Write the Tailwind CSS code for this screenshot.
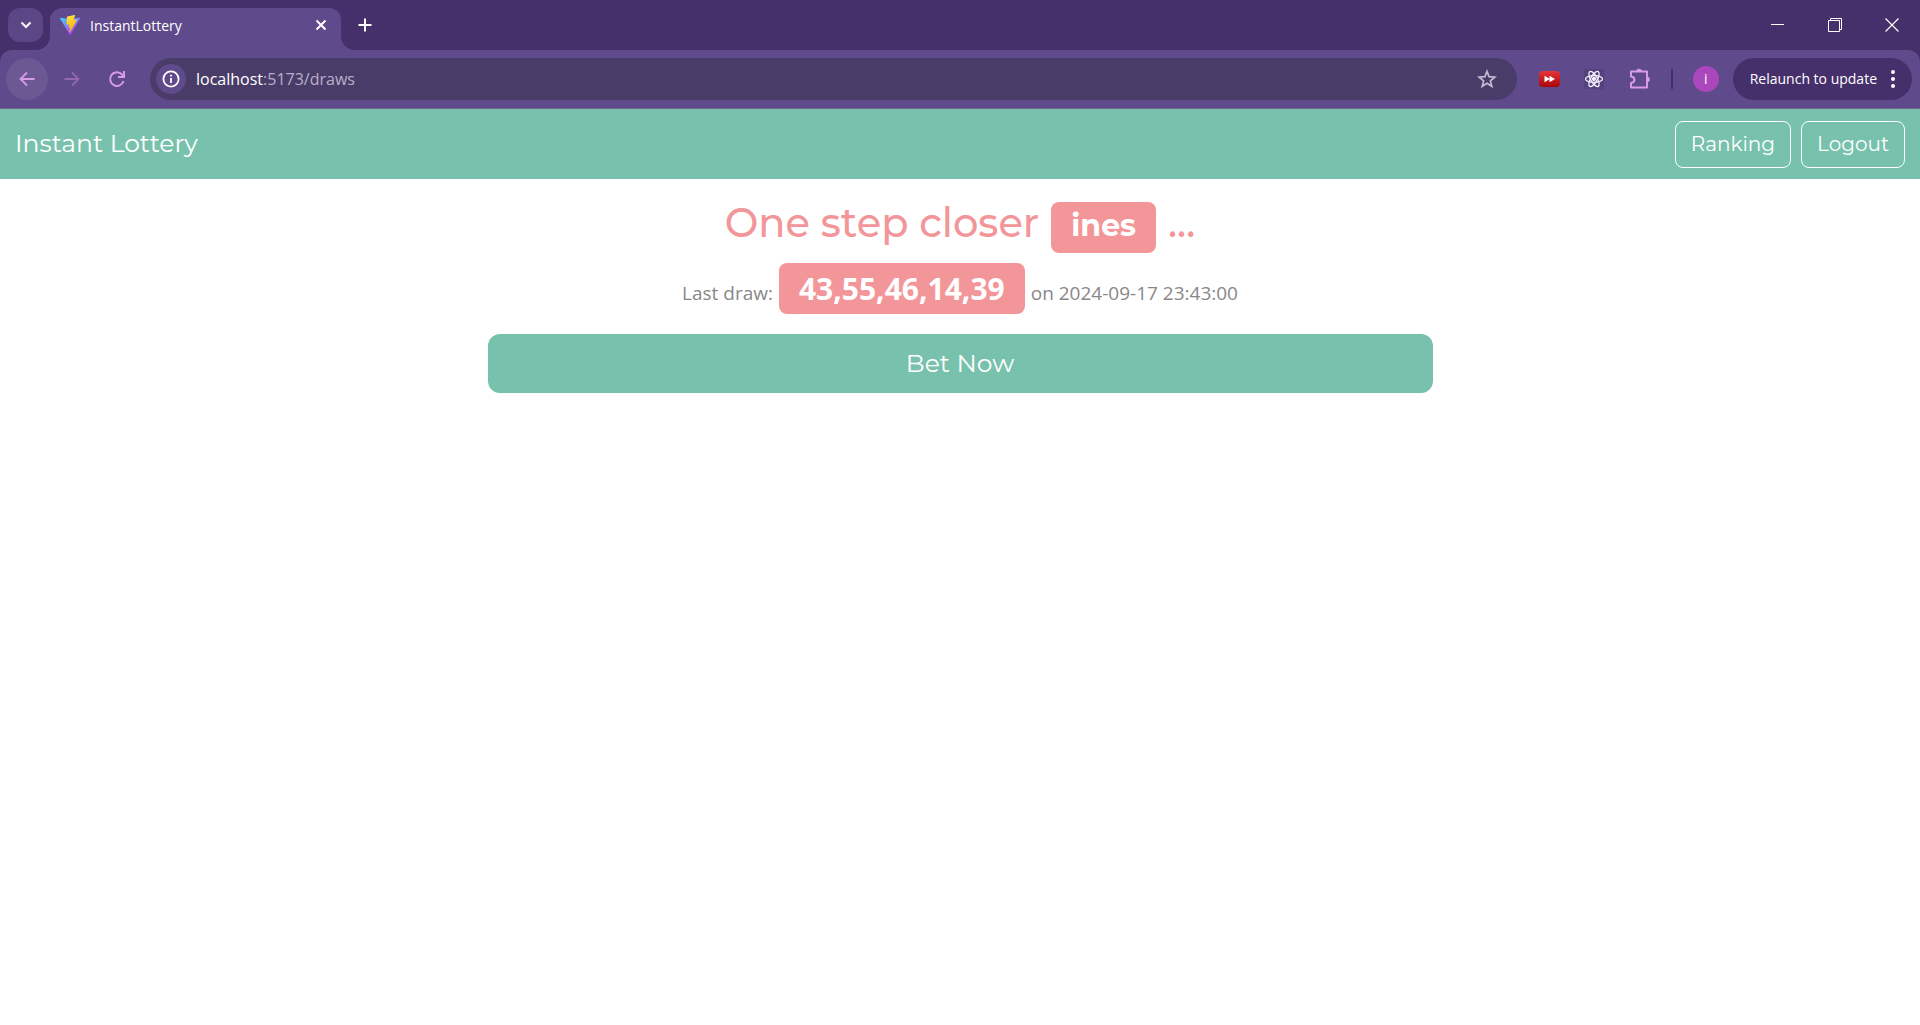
<!DOCTYPE html>
<html lang="en">
<head>
<meta charset="utf-8">
<title>InstantLottery</title>
<script src="https://cdn.jsdelivr.net/npm/@tailwindcss/browser@4"></script>
</head>
<body class="min-h-screen bg-white font-['Segoe_UI','Open_Sans',sans-serif] text-[#888888]">

<!-- Tab strip -->
<div class="flex h-[50px] items-start bg-[#46306b] pl-2 pt-2 text-white">
  <button aria-label="Search tabs" class="flex h-[34px] w-[35px] items-center justify-center rounded-xl bg-[#5b4686]">
    <svg class="size-3" viewBox="0 0 12 12" fill="none" stroke="currentColor" stroke-width="2"><path d="M1.500 3.500 6 8l4.500-4.500"/></svg>
  </button>
  <div class="relative ml-[7px] flex h-[42px] w-[291px] items-center rounded-t-xl bg-[#5f4a8b] pb-4 pl-2.5 pr-3">
    <svg class="absolute right-full bottom-0 h-3.5 w-3.5 text-[#5f4a8b]" viewBox="0 0 14 14" fill="currentColor"><path d="M14 0v14H0A14 14 0 0 0 14 0Z"/></svg>
    <svg class="absolute bottom-0 left-full h-3.5 w-3.5 text-[#5f4a8b]" viewBox="0 0 14 14" fill="currentColor"><path d="M0 0v14h14A14 14 0 0 1 0 0Z"/></svg>
    <svg class="mt-2 size-5 shrink-0" viewBox="0 0 32 32">
      <defs>
        <linearGradient id="vite" x1="0" y1="0" x2=".6" y2="1"><stop stop-color="#41d1ff"/><stop offset="1" stop-color="#bd34fe"/></linearGradient>
        <linearGradient id="bolt" x1=".4" y1="0" x2=".6" y2="1"><stop stop-color="#ffea83"/><stop offset=".1" stop-color="#ffdd35"/><stop offset="1" stop-color="#ffa800"/></linearGradient>
      </defs>
      <path fill="url(#vite)" d="M31.900 5.700 17 31.400a.800.800 0 0 1-1.400 0L.1 5.700C-.3 5 .4 4.200 1.200 4.300L16 6.900l14.800-2.600c.8-.1 1.500.7 1.100 1.400Z"/>
      <path fill="url(#bolt)" d="m23 .1-11 2.100-.9.800-.7 11.600.7.800 3.300-.6-1 6 3-.9-1.500 6.900c0 1 .9 1 1.300.4l10.600-19c.2-.6-.1-1-.6-1l-4.200.6 2-6.900c.1-.5-.4-.9-1-.8Z"/>
    </svg>
    <span class="mt-2.5 ml-2.5 grow text-sm">InstantLottery</span>
    <button aria-label="Close tab" class="mt-2 p-0.5"><svg class="size-3" viewBox="0 0 12 12" stroke="currentColor" stroke-width="2"><path d="m1.500 1.500 9 9m0-9-9 9"/></svg></button>
  </div>
  <button aria-label="New tab" class="ml-3.5 flex h-[34px] w-5 items-center justify-center">
    <svg class="size-3.5" viewBox="0 0 14 14" stroke="currentColor" stroke-width="2"><path d="M7 .5v13M.5 7h13"/></svg>
  </button>
  <div class="ml-auto flex h-[34px] items-center gap-[43px] pr-[21px]">
    <button aria-label="Minimize"><svg class="size-3.5" viewBox="0 0 14 14" stroke="currentColor"><path d="M0 6.500h13"/></svg></button>
    <button aria-label="Restore"><svg class="size-3.5" viewBox="0 0 14 14" fill="none" stroke="currentColor"><path d="M.5 2.500h11v11H.5zM2.500 2.500v-2h11v11h-2"/></svg></button>
    <button aria-label="Close"><svg class="size-3.5" viewBox="0 0 14 14" stroke="currentColor" stroke-width="1.200"><path d="m.5.500 13 13m0-13-13 13"/></svg></button>
  </div>
</div>

<!-- Toolbar -->
<div class="bg-[#46306b]">
  <div class="flex h-[59px] items-center rounded-t-xl border-b border-[#6c6a94] bg-[#5f4a8b] pl-1.5 pr-2 text-[#d79be8]">
    <button aria-label="Back" class="flex size-[42px] items-center justify-center rounded-full bg-[#6c5892]">
      <svg class="size-4" viewBox="0 0 16 16" fill="none" stroke="currentColor" stroke-width="1.800"><path d="M15.500 8H1.800M8 1.500 1.500 8 8 14.500"/></svg>
    </button>
    <button aria-label="Forward" class="ml-4 text-[#9268b0]">
      <svg class="size-4" viewBox="0 0 16 16" fill="none" stroke="currentColor" stroke-width="1.800"><path d="M.5 8h13.700M8 1.500 14.500 8 8 14.500"/></svg>
    </button>
    <button aria-label="Reload" class="ml-7">
      <svg class="size-[18px]" viewBox="0 0 18 18" fill="none" stroke="currentColor" stroke-width="2"><path d="M15.500 11A6.800 6.800 0 1 1 14 4.500l2 2M16 1v6h-6"/></svg>
    </button>
    <div class="ml-6 flex h-[42px] grow items-center rounded-full bg-[#4a3c68] pl-1.5 pr-5">
      <button aria-label="Site information" class="flex size-[30px] shrink-0 items-center justify-center rounded-full bg-[#5f4a8b] text-white">
        <svg class="size-[18px]" viewBox="0 0 18 18" fill="none" stroke="currentColor" stroke-width="1.800"><circle cx="9" cy="9" r="7.600"/><path d="M9 8v5M9 4.800v1.800"/></svg>
      </button>
      <div role="textbox" aria-label="Address" class="ml-2.5 grow text-base text-[#b9afca]"><span class="text-white">localhost</span>:5173/draws</div>
      <button aria-label="Bookmark this page" class="text-[#c4bbd2]">
        <svg class="size-5" viewBox="0 0 20 20" fill="none" stroke="currentColor" stroke-width="1.700"><path d="m10 2.400 2.100 5.300 5.700.4-4.400 3.700 1.400 5.500L10 14.200l-4.800 3.100 1.400-5.500-4.400-3.700 5.700-.4Z"/></svg>
      </button>
    </div>
    <button aria-label="Video speed extension" class="ml-[22px]">
      <svg class="h-4 w-[21px]" viewBox="0 0 21 16"><defs><linearGradient id="red" x2="0" y2="1"><stop stop-color="#e8343a"/><stop offset="1" stop-color="#a80509"/></linearGradient></defs><rect width="21" height="16" rx="4" fill="url(#red)"/><path fill="#fff" d="M5.500 4.800 11 8l-5.500 3.200zM10.500 4.800 16 8l-5.500 3.200z"/></svg>
    </button>
    <button aria-label="React Developer Tools" class="ml-6">
      <svg class="size-5" viewBox="0 0 20 20" fill="none" stroke="#f3eefb" stroke-width="1.300"><rect width="20" height="20" rx="2" fill="#54417e" stroke="none"/><circle cx="10" cy="10" r="1.500" fill="#f3eefb"/><ellipse cx="10" cy="10" rx="8.500" ry="3.300"/><ellipse cx="10" cy="10" rx="8.500" ry="3.300" transform="rotate(60 10 10)"/><ellipse cx="10" cy="10" rx="8.500" ry="3.300" transform="rotate(120 10 10)"/></svg>
    </button>
    <button aria-label="Extensions" class="ml-[25px]">
      <svg class="h-[22px] w-[22px]" viewBox="0 0 22 22" fill="none" stroke="currentColor" stroke-width="2" stroke-linejoin="round"><path d="M2 3.500h16v16H2v-4.600c4.600-.5 4.600-5.800 0-6.300Z"/><path fill="currentColor" stroke="none" d="M7.200 3.500a2.800 2.800 0 0 1 5.600 0zM18 8.700a2.800 2.800 0 0 1 0 5.600z"/></svg>
    </button>
    <div class="ml-5 h-5 w-0.5 bg-[#46306b]"></div>
    <button aria-label="Profile" class="ml-5 flex size-[26px] items-center justify-center rounded-full bg-[#ab47bc] text-sm text-white">i</button>
    <button class="ml-3.5 flex h-[42px] items-center gap-3.5 rounded-full bg-[#46306b] px-[17px] text-sm whitespace-nowrap text-white">
      Relaunch to update
      <svg class="h-5 w-1" viewBox="0 0 4 20" fill="currentColor"><circle cx="2" cy="3" r="2"/><circle cx="2" cy="10" r="2"/><circle cx="2" cy="17" r="2"/></svg>
    </button>
  </div>
</div>

<!-- Site navigation -->
<nav class="flex h-[70px] items-center justify-between bg-[#78c2ad] px-[15px] font-['Montserrat','Inter',sans-serif] text-white">
  <a href="#" class="text-[25px]">Instant Lottery</a>
  <div class="flex gap-2.5 text-xl">
    <button class="h-[47px] rounded-lg border border-white px-[15px]">Ranking</button>
    <button class="h-[47px] rounded-lg border border-white px-[15px]">Logout</button>
  </div>
</nav>

<main class="px-[15px] pt-5 text-center">
  <h1 class="flex items-start justify-center gap-3 font-['Montserrat','Inter',sans-serif] text-[40px] leading-[48px] font-medium text-[#f3969a]">
    <span>One step closer</span>
    <span class="mt-[3px] flex h-[51px] items-center rounded-lg bg-[#f3969a] px-5 pb-1 text-[30px] font-bold text-white">ines</span>
    <span>...</span>
  </h1>
  <p class="mt-2.5 flex items-baseline justify-center gap-1.5 text-[19px]">
    <span>Last draw:</span>
    <span class="h-[51px] rounded-lg bg-[#f3969a] px-5 text-[30px] leading-[51px] font-bold text-white">43,55,46,14,39</span>
    <span>on 2024-09-17 23:43:00</span>
  </p>
  <button class="mt-5 h-[59px] w-1/2 rounded-xl bg-[#78c2ad] font-['Montserrat','Inter',sans-serif] text-[25px] text-white">Bet Now</button>
</main>

</body>
</html>
